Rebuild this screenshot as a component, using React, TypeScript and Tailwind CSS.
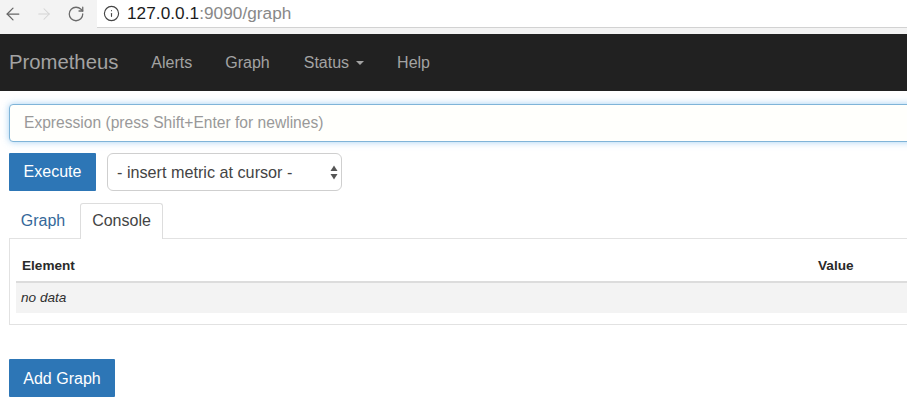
import React from "react";
import { ArrowLeft, ArrowRight, RotateCw, Info } from "lucide-react";

const font = "[font-family:'Liberation_Sans',Arial,sans-serif]";

export default function App() {
  return (
    <div className={`h-[405px] w-[907px] overflow-hidden bg-white ${font}`}>
      {/* Browser toolbar */}
      <div className="flex h-[34px] items-start bg-[#f3f3f3]">
        <div className="flex h-[27px] w-[97px] items-center pl-[3px]">
          <ArrowLeft size={20} strokeWidth={1.5} className="text-[#666]" />
          <ArrowRight size={18} strokeWidth={1.4} className="ml-[12px] text-[#d4d4d4]" />
          <RotateCw size={18} strokeWidth={1.7} className="ml-[14px] text-[#6a6a6a]" />
        </div>
        <div className="flex h-[28px] flex-1 items-center border-b border-[#d2d2d2] bg-white pl-[6px]">
          <Info size={17} strokeWidth={1.6} className="text-[#444]" />
          <span className="ml-[7px] text-[17.2px] tracking-[0.05px] text-[#1c1c1c]">127.0.0.1</span>
          <span className="text-[17.2px] tracking-[0.05px] text-[#888]">:9090/graph</span>
        </div>
      </div>

      {/* Navbar */}
      <nav className="flex h-[57px] items-center bg-[#212121] pl-[9px] text-[#a3a3a3]">
        <span className="text-[20.3px]">Prometheus</span>
        <span className="ml-[33px] text-[16px]">Alerts</span>
        <span className="ml-[33px] text-[16px]">Graph</span>
        <span className="ml-[34px] flex items-center text-[16px]">
          Status
          <span className="ml-[7px] mt-[1px] h-0 w-0 border-x-[4.5px] border-t-[4px] border-x-transparent border-t-[#a3a3a3]" />
        </span>
        <span className="ml-[33px] text-[16px]">Help</span>
      </nav>

      {/* Content */}
      <div className="w-[960px] pl-[9px] pt-[13px]">
        <input
          readOnly
          placeholder="Expression (press Shift+Enter for newlines)"
          className="block h-[38px] w-full rounded-[4px] border border-[#7fb4d8] bg-[#fffffc] px-[14px] text-[15.6px] text-[#555] shadow-[0_0_7px_rgba(102,175,233,0.6)] outline-none placeholder:text-[#999]"
        />

        <div className="mt-[11px] flex items-center gap-[11px]">
          <button className="h-[38px] w-[87px] rounded-[1px] bg-[#2d76b6] text-[16px] text-white">Execute</button>
          <div className="relative h-[38px] w-[235px]">
            <select className="h-full w-full appearance-none rounded-[6px] border border-[#cfcfcf] bg-white pl-[9px] text-[16.2px] text-[#444] outline-none">
              <option>- insert metric at cursor -</option>
            </select>
            <svg width="8" height="15" viewBox="0 0 8 15" className="absolute right-[4px] top-[12px]" fill="#555">
              <path d="M4 0.5 7.5 6H0.5Z" />
              <path d="M4 14.5 0.5 9H7.5Z" />
            </svg>
          </div>
        </div>

        {/* Tabs */}
        <div className="mt-[12px] flex h-[36px] text-[16px]">
          <span className="flex w-[71px] items-center justify-center pb-[1px] pr-[3px] text-[#35689a]">Graph</span>
          <span className="z-10 flex h-[36px] w-[83px] items-center justify-center rounded-t-[3px] border border-b-0 border-[#dddddd] bg-white pb-[1px] text-[#444]">
            Console
          </span>
        </div>

        {/* Panel */}
        <div className="-mt-px h-[87px] border border-[#e2e2e2] px-[6px] pt-[17px]">
          <div className="flex h-[27px] items-start border-b-[2px] border-[#dcdcdc] pl-[6px] text-[13.6px] font-bold leading-[20px] text-[#2a2a2a]">
            <span className="w-[796px]">Element</span>
            <span>Value</span>
          </div>
          <div className="flex h-[30px] items-center bg-[#f3f3f3] pl-[5px] text-[13.6px] italic text-[#2f2f2f]">no data</div>
        </div>

        <button className="mt-[34px] h-[38px] w-[106px] rounded-[1px] bg-[#2d76b6] pt-[1px] text-[16px] text-white">Add Graph</button>
      </div>
    </div>
  );
}
